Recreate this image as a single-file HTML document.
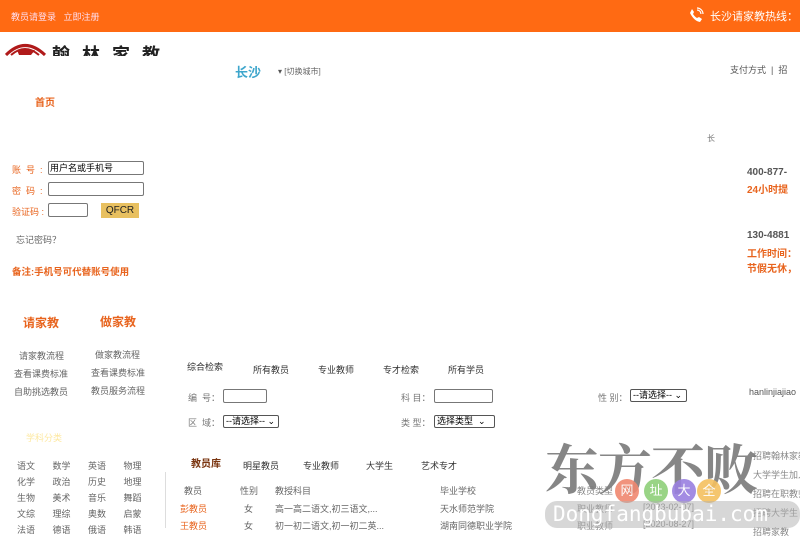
<!DOCTYPE html>
<html><head><meta charset="utf-8"><style>
*{margin:0;padding:0;box-sizing:border-box}
body{width:800px;height:528px;overflow:hidden;background:#fff;position:relative;font-family:"Liberation Sans","Noto Sans CJK SC",sans-serif;font-size:9px;color:#555}
.a{position:absolute;white-space:nowrap}
.o{color:#e8641e;font-weight:bold}
.in{position:absolute;border:1px solid #777;border-radius:2px;background:#fff;height:14px;font-size:9px;color:#000;padding-left:1px;line-height:12px}
.sel{position:absolute;border:1px solid #555;border-radius:2px;background:#fff;height:13px;font-size:9px;color:#000;line-height:11px;padding-left:2px}
</style></head><body>
<div class="a" style="left:0;top:0;width:800px;height:32px;background:#ff6a13"></div>
<div class="a" style="left:11px;top:10px;color:#fde;font-size:9px">教员请登录&nbsp;&nbsp;&nbsp;立即注册</div>
<svg class="a" style="left:688px;top:7px" width="16" height="16" viewBox="0 0 16 16"><path d="M4 2 L6 5 L5 7 Q7 10 9 11 L11 10 L14 12 L12 15 Q6 14 2 6 Z" fill="#fff"/><path d="M9 3 A4 4 0 0 1 13 7 M9 1 A6 6 0 0 1 15 7" stroke="#fff" fill="none" stroke-width="1.2"/></svg>
<div class="a" style="left:710px;top:8px;color:#fff;font-size:11px">长沙请家教热线：</div>
<svg class="a" style="left:5px;top:40px" width="42" height="16" viewBox="0 0 42 16"><path d="M1 15 Q20 -4 40 15" stroke="#b01a1a" stroke-width="3" fill="none"/><path d="M6 15 Q20 3 34 15" stroke="#b01a1a" stroke-width="2" fill="none"/><path d="M12 10 L30 10 L26 15 L14 15 Z" fill="#b01a1a"/></svg>
<div class="a" style="left:52px;top:44px;font-size:18px;color:#222;font-weight:bold;letter-spacing:12px;height:12px;overflow:hidden;line-height:22px">翰林家教</div>
<div class="a" style="left:235px;top:62px;color:#3ea6cc;font-size:13px;font-weight:bold">长沙</div>
<div class="a" style="left:278px;top:66px;color:#555;font-size:8px">▾ <span style="color:#666">[切换城市]</span></div>
<div class="a" style="left:730px;top:63px;color:#555">支付方式 &nbsp;| &nbsp;招</div>
<div class="a o" style="left:35px;top:94px;font-size:10px">首页</div>
<div class="a" style="left:707px;top:133px;font-size:8px;color:#777">长</div>
<div class="a" style="left:12px;top:163px;color:#e8641e">账 &nbsp;号 &nbsp;:</div>
<div class="in" style="left:48px;top:161px;width:96px">用户名或手机号</div>
<div class="a" style="left:12px;top:184px;color:#e8641e">密 &nbsp;码 &nbsp;:</div>
<div class="in" style="left:48px;top:182px;width:96px"></div>
<div class="a" style="left:12px;top:205px;color:#e8641e">验证码 :</div>
<div class="in" style="left:48px;top:203px;width:40px"></div>
<div class="a" style="left:101px;top:203px;width:38px;height:15px;background:#e8c060;color:#222;font-size:10px;text-align:center;line-height:15px">QFCR</div>
<div class="a" style="left:16px;top:233px;color:#666">忘记密码？</div>
<div class="a o" style="left:12px;top:264px;font-size:9.5px">备注:手机号可代替账号使用</div>
<div class="a" style="left:747px;top:167px;font-size:10px;font-weight:bold;color:#555">400-877-</div>
<div class="a o" style="left:747px;top:181px;font-size:10px">24小时提</div>
<div class="a" style="left:747px;top:230px;font-size:10px;font-weight:bold;color:#555">130-4881</div>
<div class="a o" style="left:747px;top:245px;font-size:10px">工作时间：</div>
<div class="a o" style="left:747px;top:260px;font-size:10px">节假无休，</div>
<div class="a o" style="left:23px;top:314px;font-size:12px">请家教</div>
<div class="a o" style="left:100px;top:313px;font-size:12px">做家教</div>
<div class="a" style="left:19px;top:347px;line-height:18px;color:#666">请家教流程<br><span style="margin-left:-5px">查看课费标准</span><br><span style="margin-left:-5px">自助挑选教员</span></div>
<div class="a" style="left:95px;top:346px;line-height:18px;color:#666">做家教流程<br><span style="margin-left:-4px">查看课费标准</span><br><span style="margin-left:-4px">教员服务流程</span></div>
<div class="a" style="left:26px;top:431px;color:#fde8a0;font-size:9px">学科分类</div>
<div class="a" style="left:17px;top:458px;line-height:16px;color:#666;word-spacing:0">
<div>语文&nbsp;&nbsp;&nbsp;&nbsp;&nbsp;&nbsp;&nbsp;数学&nbsp;&nbsp;&nbsp;&nbsp;&nbsp;&nbsp;&nbsp;英语&nbsp;&nbsp;&nbsp;&nbsp;&nbsp;&nbsp;&nbsp;物理</div>
<div>化学&nbsp;&nbsp;&nbsp;&nbsp;&nbsp;&nbsp;&nbsp;政治&nbsp;&nbsp;&nbsp;&nbsp;&nbsp;&nbsp;&nbsp;历史&nbsp;&nbsp;&nbsp;&nbsp;&nbsp;&nbsp;&nbsp;地理</div>
<div>生物&nbsp;&nbsp;&nbsp;&nbsp;&nbsp;&nbsp;&nbsp;美术&nbsp;&nbsp;&nbsp;&nbsp;&nbsp;&nbsp;&nbsp;音乐&nbsp;&nbsp;&nbsp;&nbsp;&nbsp;&nbsp;&nbsp;舞蹈</div>
<div>文综&nbsp;&nbsp;&nbsp;&nbsp;&nbsp;&nbsp;&nbsp;理综&nbsp;&nbsp;&nbsp;&nbsp;&nbsp;&nbsp;&nbsp;奥数&nbsp;&nbsp;&nbsp;&nbsp;&nbsp;&nbsp;&nbsp;启蒙</div>
<div>法语&nbsp;&nbsp;&nbsp;&nbsp;&nbsp;&nbsp;&nbsp;德语&nbsp;&nbsp;&nbsp;&nbsp;&nbsp;&nbsp;&nbsp;俄语&nbsp;&nbsp;&nbsp;&nbsp;&nbsp;&nbsp;&nbsp;韩语</div>
</div>
<div class="a" style="left:165px;top:472px;width:1px;height:56px;background:#ddd"></div>
<div class="a" style="left:187px;top:360px;color:#333">综合检索</div>
<div class="a" style="left:253px;top:363px;color:#333">所有教员</div>
<div class="a" style="left:318px;top:363px;color:#333">专业教师</div>
<div class="a" style="left:383px;top:363px;color:#333">专才检索</div>
<div class="a" style="left:448px;top:363px;color:#333">所有学员</div>
<div class="a" style="left:188px;top:391px;color:#777">编 &nbsp;号：</div>
<div class="in" style="left:223px;top:389px;width:44px"></div>
<div class="a" style="left:188px;top:416px;color:#777">区 &nbsp;域：</div>
<div class="sel" style="left:223px;top:415px;width:56px">--请选择-- ⌄</div>
<div class="a" style="left:401px;top:391px;color:#777">科 目：</div>
<div class="in" style="left:434px;top:389px;width:59px"></div>
<div class="a" style="left:401px;top:416px;color:#777">类 型：</div>
<div class="sel" style="left:434px;top:415px;width:61px">选择类型 &nbsp;⌄</div>
<div class="a" style="left:598px;top:391px;color:#777">性 别：</div>
<div class="sel" style="left:630px;top:389px;width:57px">--请选择-- ⌄</div>
<div class="a" style="left:749px;top:387px;color:#555">hanlinjiajiao</div>
<div class="a" style="left:191px;top:455px;color:#7a3510;font-weight:bold;font-size:10px">教员库</div>
<div class="a" style="left:243px;top:459px;color:#333">明星教员</div>
<div class="a" style="left:303px;top:459px;color:#333">专业教师</div>
<div class="a" style="left:366px;top:459px;color:#333">大学生</div>
<div class="a" style="left:421px;top:459px;color:#333">艺术专才</div>
<div class="a" style="left:184px;top:484px;color:#666">教员</div>
<div class="a" style="left:240px;top:484px;color:#666">性别</div>
<div class="a" style="left:275px;top:484px;color:#666">教授科目</div>
<div class="a" style="left:440px;top:484px;color:#666">毕业学校</div>
<div class="a" style="left:577px;top:484px;color:#888">教员类型</div>
<div class="a" style="left:180px;top:502px;color:#e8641e">彭教员</div>
<div class="a" style="left:244px;top:502px;color:#666">女</div>
<div class="a" style="left:275px;top:502px;color:#666">高一高二语文,初三语文,...</div>
<div class="a" style="left:440px;top:502px;color:#666">天水师范学院</div>
<div class="a" style="left:577px;top:502px;color:#888">职业教师</div>
<div class="a" style="left:643px;top:502px;color:#888">[2023-02-07]</div>
<div class="a" style="left:180px;top:519px;color:#e8641e">王教员</div>
<div class="a" style="left:244px;top:519px;color:#666">女</div>
<div class="a" style="left:275px;top:519px;color:#666">初一初二语文,初一初二英...</div>
<div class="a" style="left:440px;top:519px;color:#666">湖南同德职业学院</div>
<div class="a" style="left:577px;top:519px;color:#888">职业教师</div>
<div class="a" style="left:643px;top:519px;color:#888">[2020-08-27]</div>
<div class="a" style="left:753px;top:447px;color:#888;line-height:19px">招聘翰林家教<br>大学学生加入<br>招聘在职教师<br>招聘大学生<br>招聘家教</div>
<div class="a" style="left:545px;top:428px;font-size:54px;color:#7a7a7a;font-family:'Noto Serif CJK SC',serif;font-weight:bold;letter-spacing:-1px;opacity:.9">东方不败</div>
<div class="a" style="left:615px;top:479px;width:24px;height:24px;border-radius:12px;background:#f08870;color:#fff;font-size:13px;text-align:center;line-height:24px;opacity:.9">网</div>
<div class="a" style="left:644px;top:479px;width:24px;height:24px;border-radius:12px;background:#8fd07a;color:#fff;font-size:13px;text-align:center;line-height:24px;opacity:.9">址</div>
<div class="a" style="left:672px;top:479px;width:24px;height:24px;border-radius:12px;background:#9a80e0;color:#fff;font-size:13px;text-align:center;line-height:24px;opacity:.9">大</div>
<div class="a" style="left:697px;top:479px;width:24px;height:24px;border-radius:12px;background:#f5c060;color:#fff;font-size:13px;text-align:center;line-height:24px;opacity:.9">全</div>
<div class="a" style="left:545px;top:501px;width:255px;height:27px;border-radius:12px;background:rgba(175,175,175,.5);color:#fff;font-size:21px;line-height:27px;padding-left:8px;font-family:'DejaVu Sans Mono',monospace">Dongfangbubai.com</div>
</body></html>
